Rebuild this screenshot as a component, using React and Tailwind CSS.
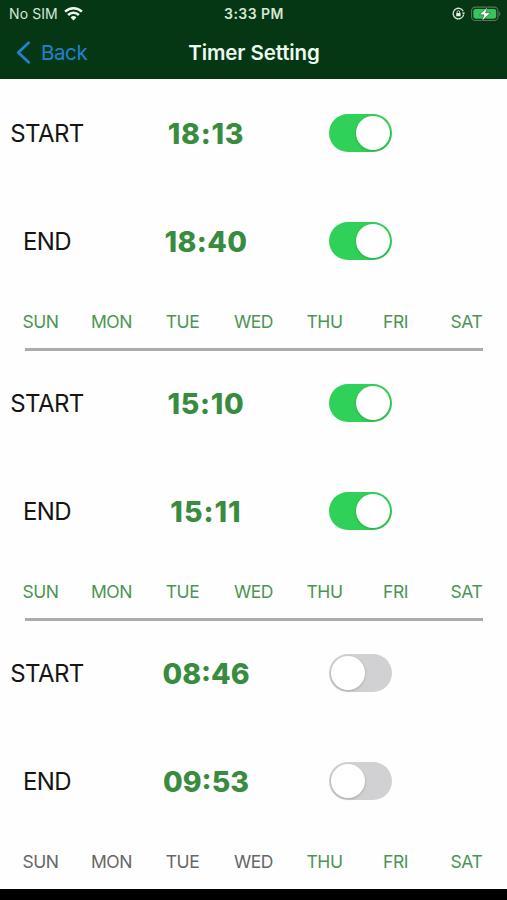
const DAYS = ["SUN", "MON", "TUE", "WED", "THU", "FRI", "SAT"];

const TIMERS = [
  { start: "18:13", end: "18:40", enabled: true, days: DAYS },
  { start: "15:10", end: "15:11", enabled: true, days: DAYS },
  { start: "08:46", end: "09:53", enabled: false, days: ["THU", "FRI", "SAT"] },
];

// The digit 1 is narrow, so times that hold it are spaced a little wider.
const TIME_TRACKING = [
  "tracking-normal",
  "tracking-[0.4px]",
  "tracking-[0.7px]",
  "tracking-[1px]",
];

function StatusBar() {
  return (
    <div className="grid h-[27px] grid-cols-3 items-center pl-[9px] pr-[6px] text-[13.5px] leading-none text-[#d6e6d6]">
      <div className="flex items-center gap-[6px]">
        <span className="pt-px text-[14px] tracking-[0.1px]">No SIM</span>
        <svg width="19" height="14" viewBox="0 0 19 14" fill="none" stroke="#f2faf2" strokeWidth="2.5">
          <path d="M1.1 4.7a12 12 0 0 1 16.8 0" />
          <path d="M4.1 8a7.6 7.6 0 0 1 10.8 0" />
          <path d="M9.5 13.4 6.6 10.5a4.1 4.1 0 0 1 5.8 0z" fill="#f2faf2" stroke="none" />
        </svg>
      </div>
      <span className="pr-[2px] text-center text-[14px] font-semibold tracking-[0.45px]">3:33 PM</span>
      <div className="flex items-center justify-end gap-[6px]">
        <svg width="13" height="13" viewBox="0 0 13 13" fill="none" stroke="#d6e6d6">
          <path d="M11.2 4.2A5.3 5.3 0 1 0 11.6 7.8" strokeWidth="1.3" />
          <path d="m9.8 5.4 3.1.2-1 2.3z" fill="#d6e6d6" stroke="none" />
          <rect x="4.2" y="5.9" width="4.4" height="3.3" rx=".5" fill="#e8f3e8" stroke="none" />
          <path d="M5.1 6V5a1.3 1.3 0 0 1 2.6 0v1" strokeWidth=".9" />
        </svg>
        <svg width="30" height="16" viewBox="0 0 30 16">
          <rect x=".6" y="1.1" width="26.4" height="13.4" rx="3.8" fill="none" stroke="#58775c" strokeWidth="1.1" />
          <rect x="2.4" y="2.9" width="22.8" height="9.8" rx="2.1" fill="#35c45d" />
          <path d="M28.2 5.6v4.6c1.5-.7 1.5-3.9 0-4.6z" fill="#58775c" />
          <path d="M16.6.9 8.4 8.8h4.5l-2.1 6.4 8.8-8.4h-5z" fill="#fff" stroke="#053714" strokeWidth=".5" />
        </svg>
      </div>
    </div>
  );
}

function NavBar() {
  return (
    <div className="grid h-[51px] grid-cols-[1fr_auto_1fr] items-center pl-[16px] pr-[15px] text-[20.5px] leading-none">
      <button className="flex items-center gap-[11px] text-[#2381cf]">
        <svg width="14" height="23" viewBox="0 0 14 23" fill="none" stroke="currentColor" strokeWidth="2.8" strokeLinecap="round" strokeLinejoin="round">
          <path d="M12.6 1.7 2.3 11.5l10.3 9.8" />
        </svg>
        <span className="pt-[2px] tracking-[-0.4px]">Back</span>
      </button>
      <h1 className="pt-[2px] font-semibold tracking-[-0.1px] text-[#eefbef]">Timer Setting</h1>
    </div>
  );
}

function Toggle({ on }) {
  return (
    <button
      role="switch"
      aria-checked={on}
      className={`flex h-[38px] w-[63px] items-center rounded-full px-[2px] ${
        on ? "justify-end bg-[#30d158]" : "justify-start bg-[#d1d1d3]"
      }`}
    >
      <span className="size-[34px] rounded-full bg-white shadow-[0_1px_3px_rgba(0,0,0,0.2)]" />
    </button>
  );
}

function TimeRow({ label, time, on }) {
  const tracking = TIME_TRACKING[time.split("1").length - 1];
  return (
    <div className="grid h-[108px] shrink-0 grid-cols-[94px_224px_85px] items-center justify-items-center leading-none">
      <span className="pt-[2px] text-[24px] tracking-[-0.6px] text-[#151515]">{label}</span>
      <span className={`pt-[3px] text-[28.5px] font-extrabold text-[#398b40] ${tracking}`}>{time}</span>
      <Toggle on={on} />
    </div>
  );
}

function Timer({ timer, divider }) {
  return (
    <section className="flex h-[270px] flex-col">
      <TimeRow label="START" time={timer.start} on={timer.enabled} />
      <TimeRow label="END" time={timer.end} on={timer.enabled} />
      <div className="grid h-[53px] shrink-0 grid-cols-7 items-center px-[5px] text-center text-[17.5px] leading-none tracking-[-0.4px]">
        {DAYS.map((day) => (
          <span key={day} className={timer.days.includes(day) ? "text-[#4b9455]" : "text-[#666666]"}>
            {day}
          </span>
        ))}
      </div>
      {divider && <div className="ml-[25px] mr-[24px] h-[3px] shrink-0 bg-[#ababab]" />}
    </section>
  );
}

export default function App() {
  return (
    <div className="flex h-[900px] w-[507px] flex-col overflow-hidden bg-black font-['Inter',sans-serif]">
      <header className="h-[79px] shrink-0 bg-[#053714]">
        <StatusBar />
        <NavBar />
      </header>
      <main className="h-[810px] shrink-0 bg-[#fefefe]">
        {TIMERS.map((timer, i) => (
          <Timer key={i} timer={timer} divider={i < TIMERS.length - 1} />
        ))}
      </main>
    </div>
  );
}
